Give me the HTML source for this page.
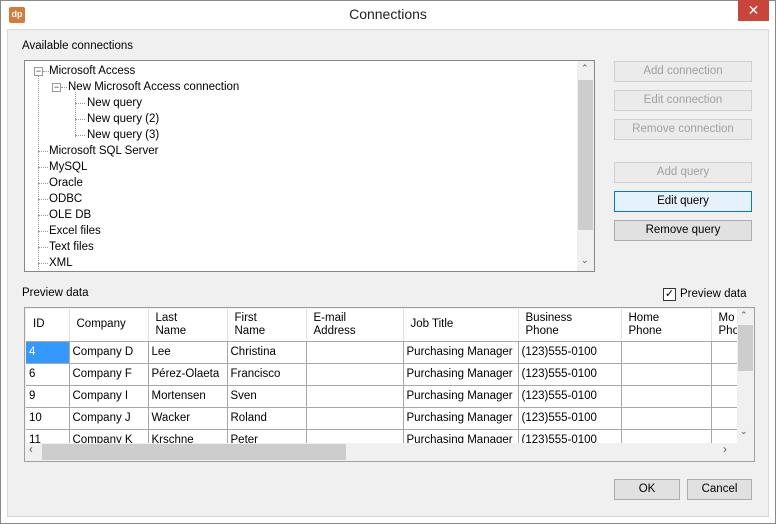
<!DOCTYPE html>
<html><head><style>
*{box-sizing:border-box;margin:0;padding:0}
body{width:776px;height:524px;background:#fff;font-family:"Liberation Sans",sans-serif;font-size:11.5px;color:#000;position:relative;overflow:hidden}
.a{position:absolute}
.win{left:0;top:0;width:776px;height:524px;border:1px solid #888;background:#fff}
.client{left:7px;top:29px;width:762px;height:488px;background:#f0f0f0;border:1px solid #d8d8d8}
.btn{position:absolute;left:614px;width:138px;height:21px;border:1px solid #adadad;background:#e1e1e1;text-align:center;line-height:19px;color:#000}
.dis{color:#a0a0a0;border-color:#d0d0d0;background:#ebebeb}
.tree div{position:absolute;white-space:nowrap}
.dot{border-left:1px dotted #999}
.hd{border-top:1px dotted #999}
.pm{width:9px;height:9px;border:1px solid #999;background:#fff;font-size:9px;line-height:6px;text-align:center;color:#333}
table{border-collapse:collapse;position:absolute;left:1px;top:1px;table-layout:fixed}
td{border-right:1px solid #a8a8a8;border-bottom:1px solid #a8a8a8;height:22px;padding:0 3px;white-space:nowrap;overflow:hidden;background:#fff}
th{font-weight:normal;text-align:left;height:32px;padding:0 7px;border-right:1px solid #e0e0e0;border-bottom:1px solid #a8a8a8;background:#fff;line-height:13px;vertical-align:middle;overflow:hidden;white-space:nowrap}
</style></head><body>
<div class="a win"></div>
<div class="a" style="left:9px;top:7px;width:16px;height:16px;background:#d47a3a;color:#fff;font-size:9px;font-weight:bold;text-align:center;line-height:15px;border-radius:2px">dp</div>
<div class="a" style="left:0;top:6px;width:776px;text-align:center;font-size:14px;color:#222">Connections</div>
<div class="a" style="left:738px;top:0;width:31px;height:21px;background:#c7453a;color:#fff;text-align:center;font-size:14px;line-height:20px">✕</div>
<div class="a client"></div>
<div class="a" style="left:22px;top:40px">Available connections</div>
<div class="a tree" style="left:24px;top:60px;width:571px;height:212px;background:#fff;border:1px solid #828790">
 <div class="dot" style="left:13px;top:11px;height:197px"></div>
 <div class="dot" style="left:50px;top:31px;height:45px"></div>
 <div class="pm" style="left:9px;top:6px">−</div><div class="hd" style="left:18px;top:10px;width:6px"></div>
 <div style="left:24px;top:4px">Microsoft Access</div>
 <div class="pm" style="left:27px;top:22px">−</div><div class="hd" style="left:36px;top:26px;width:6px"></div>
 <div style="left:43px;top:20px">New Microsoft Access connection</div>
 <div class="hd" style="left:50px;top:42px;width:10px"></div><div style="left:62px;top:36px">New query</div>
 <div class="hd" style="left:50px;top:58px;width:10px"></div><div style="left:62px;top:52px">New query (2)</div>
 <div class="hd" style="left:50px;top:74px;width:10px"></div><div style="left:62px;top:68px">New query (3)</div>
 <div class="hd" style="left:13px;top:90px;width:10px"></div><div style="left:24px;top:84px">Microsoft SQL Server</div>
 <div class="hd" style="left:13px;top:106px;width:10px"></div><div style="left:24px;top:100px">MySQL</div>
 <div class="hd" style="left:13px;top:122px;width:10px"></div><div style="left:24px;top:116px">Oracle</div>
 <div class="hd" style="left:13px;top:138px;width:10px"></div><div style="left:24px;top:132px">ODBC</div>
 <div class="hd" style="left:13px;top:154px;width:10px"></div><div style="left:24px;top:148px">OLE DB</div>
 <div class="hd" style="left:13px;top:170px;width:10px"></div><div style="left:24px;top:164px">Excel files</div>
 <div class="hd" style="left:13px;top:186px;width:10px"></div><div style="left:24px;top:180px">Text files</div>
 <div class="hd" style="left:13px;top:202px;width:10px"></div><div style="left:24px;top:196px">XML</div>
 <div style="left:552px;top:0;width:17px;height:210px;background:#f0f0f0"></div>
 <div style="left:553px;top:19px;width:15px;height:150px;background:#cdcdcd"></div>
 <div style="left:556px;top:2px;font-size:9px;color:#555">⌃</div>
 <div style="left:556px;top:194px;font-size:9px;color:#555">⌄</div>
</div>
<div class="btn dis" style="top:61px">Add connection</div>
<div class="btn dis" style="top:90px">Edit connection</div>
<div class="btn dis" style="top:119px">Remove connection</div>
<div class="btn dis" style="top:162px">Add query</div>
<div class="btn" style="top:191px;border-color:#0078d7;background:#e5f1fb">Edit query</div>
<div class="btn" style="top:220px">Remove query</div>
<div class="a" style="left:22px;top:287px">Preview data</div>
<div class="a" style="left:663px;top:288px;width:13px;height:13px;border:1px solid #333;background:#fff;font-size:11px;line-height:11px;text-align:center">✓</div>
<div class="a" style="left:680px;top:288px">Preview data</div>
<div class="a" style="left:24px;top:307px;width:731px;height:155px;background:#f0f0f0;border:1px solid #a0a0a0;overflow:hidden">
<table>
<colgroup><col width="43"><col width="79"><col width="79"><col width="79"><col width="97"><col width="115"><col width="103"><col width="90"><col width="40"></colgroup>
<tr><th>ID</th><th>Company</th><th>Last<br>Name</th><th>First<br>Name</th><th>E-mail<br>Address</th><th>Job Title</th><th>Business<br>Phone</th><th>Home<br>Phone</th><th>Mo<br>Pho</th></tr>
<tr><td style="background:#3399ff;color:#fff">4</td><td>Company D</td><td>Lee</td><td>Christina</td><td></td><td>Purchasing Manager</td><td>(123)555-0100</td><td></td><td></td></tr>
<tr><td>6</td><td>Company F</td><td>Pérez-Olaeta</td><td>Francisco</td><td></td><td>Purchasing Manager</td><td>(123)555-0100</td><td></td><td></td></tr>
<tr><td>9</td><td>Company I</td><td>Mortensen</td><td>Sven</td><td></td><td>Purchasing Manager</td><td>(123)555-0100</td><td></td><td></td></tr>
<tr><td>10</td><td>Company J</td><td>Wacker</td><td>Roland</td><td></td><td>Purchasing Manager</td><td>(123)555-0100</td><td></td><td></td></tr>
<tr><td>11</td><td>Company K</td><td>Krschne</td><td>Peter</td><td></td><td>Purchasing Manager</td><td>(123)555-0100</td><td></td><td></td></tr>
</table>
<div class="a" style="left:712px;top:0;width:17px;height:135px;background:#f0f0f0"></div>
<div class="a" style="left:713px;top:17px;width:15px;height:46px;background:#cdcdcd"></div>
<div class="a" style="left:715px;top:2px;font-size:9px;color:#555">⌃</div>
<div class="a" style="left:715px;top:118px;font-size:9px;color:#555">⌄</div>
<div class="a" style="left:0;top:135px;width:729px;height:18px;background:#f0f0f0"></div>
<div class="a" style="left:17px;top:136px;width:304px;height:16px;background:#cdcdcd"></div>
<div class="a" style="left:4px;top:136px;color:#555">‹</div>
<div class="a" style="left:698px;top:136px;color:#555">›</div>
</div>
<div class="btn" style="left:614px;top:479px;width:66px">OK</div>
<div class="btn" style="left:687px;top:479px;width:65px">Cancel</div>
</body></html>
